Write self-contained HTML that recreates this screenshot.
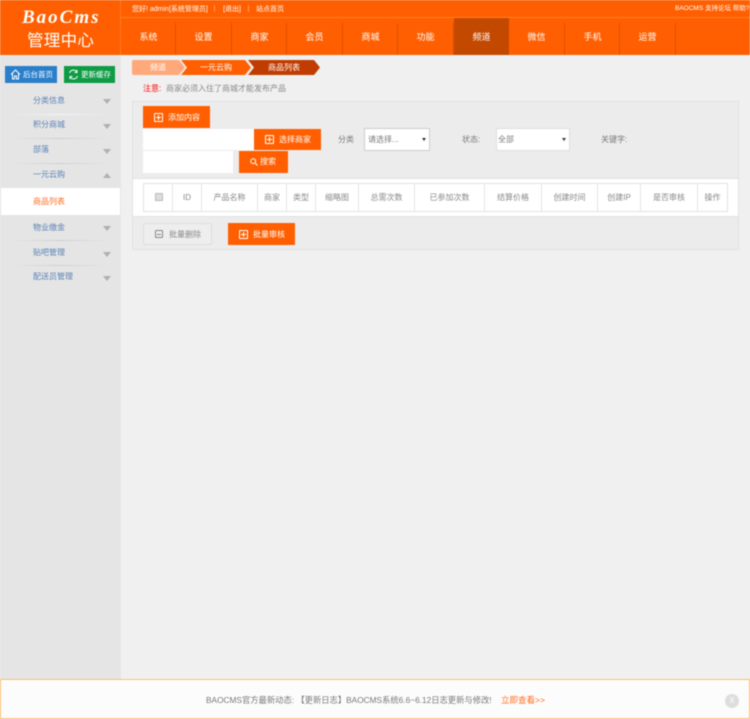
<!DOCTYPE html>
<html lang="zh"><head><meta charset="utf-8"><title>管理中心</title>
<style>
html,body{margin:0;padding:0;width:750px;height:719px;overflow:hidden;background:#f0f0f0}
#w{position:absolute;left:0;top:0;width:750px;height:719px;overflow:hidden;filter:blur(.4px);font-family:"Liberation Sans","WenQuanYi Zen Hei","Noto Sans CJK SC",sans-serif;font-size:8px;color:#7a7a7a}
.a{position:absolute;white-space:nowrap;line-height:1}
.b{position:absolute}
.nav{position:absolute;top:27px;width:55px;text-align:center;color:#fff;font-size:9px;line-height:20px;height:20px}
.sep{position:absolute;top:23px;width:1px;height:32px;background:#e04f00}
.side{position:absolute;left:33px;color:#5b82b5;font-size:8px;line-height:10px;white-space:nowrap}
.tri{position:absolute;left:103px;width:0;height:0;border-left:4px solid transparent;border-right:4px solid transparent;border-top:5px solid #b0b0b0}
.tri.up{border-top:0;border-bottom:5px solid #b0b0b0}
.hr{position:absolute;left:10px;width:100px;height:1px;background:linear-gradient(90deg,#e5e5e5,#cfcfcf 50%,#e5e5e5)}
.btn{position:absolute;background:#ff5f00;color:#fff;font-size:8px;line-height:1;box-sizing:border-box;white-space:nowrap}
.plus{position:absolute;width:7px;height:7px;border:1px solid #fff;border-radius:1px}
.plus:before{content:"";position:absolute;left:1px;right:1px;top:3px;height:1px;background:#fff}
.plus:after{content:"";position:absolute;top:1px;bottom:1px;left:3px;width:1px;background:#fff}
.th{position:absolute;top:183px;height:28px;line-height:30px;text-align:center;font-size:8px;color:#888;border-right:1px solid #e6e6e6;box-sizing:border-box;white-space:nowrap}
</style></head><body><div id="w">
<!-- header -->
<div class="b" style="left:0;top:0;width:750px;height:55px;background:#ff5f00"></div>
<div class="b" style="left:120px;top:0;width:1px;height:55px;background:#ff7a20"></div>
<div class="b" style="left:120px;top:17px;width:630px;height:1px;background:#ff7f2a"></div>
<div class="a" style="left:22px;top:7px;font:italic bold 19px 'Liberation Serif',serif;color:#fff;letter-spacing:2px;">BaoCms</div>
<div class="a" style="left:27px;top:33px;font-size:16.5px;color:#fff;letter-spacing:.3px">管理中心</div>
<div class="a" style="left:132px;top:6px;color:#fff;font-size:7px">您好! admin[系统管理员]</div>
<div class="b" style="left:214px;top:5px;width:1px;height:7px;background:#ff9a55"></div>
<div class="a" style="left:223px;top:6px;color:#fff;font-size:7px">[退出]</div>
<div class="b" style="left:248px;top:5px;width:1px;height:7px;background:#ff9a55"></div>
<div class="a" style="left:256px;top:6px;color:#fff;font-size:7px">站点首页</div>
<div class="a" style="left:675px;top:6px;color:#fff;font-size:6.5px">BAOCMS 支持论坛 帮助?</div>
<div class="b" style="left:453.5px;top:18px;width:55.5px;height:37px;background:#c44900"></div>
<div class="nav" style="left:121px">系统</div><div class="sep" style="left:175px"></div>
<div class="nav" style="left:176px">设置</div><div class="sep" style="left:231px"></div>
<div class="nav" style="left:232px">商家</div><div class="sep" style="left:286px"></div>
<div class="nav" style="left:287px">会员</div><div class="sep" style="left:342px"></div>
<div class="nav" style="left:343px">商城</div><div class="sep" style="left:397px"></div>
<div class="nav" style="left:398px">功能</div><div class="sep" style="left:453px"></div>
<div class="nav" style="left:454px">频道</div>
<div class="nav" style="left:509px">微信</div><div class="sep" style="left:564px"></div>
<div class="nav" style="left:565px">手机</div><div class="sep" style="left:619px"></div>
<div class="nav" style="left:620px">运营</div><div class="sep" style="left:675px"></div>
<!-- sidebar -->
<div class="b" style="left:0;top:55px;width:121px;height:625px;background:#e5e5e5"></div>
<div class="b" style="left:5px;top:66px;width:52px;height:17px;background:#2a7fcb;color:#fff;font-size:7.5px;line-height:17px;text-indent:18px;white-space:nowrap">后台首页
<svg style="position:absolute;left:5px;top:3px" width="11" height="11" viewBox="0 0 11 11" fill="none" stroke="#fff" stroke-width="1"><path d="M1 5.5 5.5 1 10 5.5M2.5 4.5V10H4.5V7H6.5V10H8.5V4.5"/></svg></div>
<div class="b" style="left:64px;top:66px;width:51px;height:17px;background:#0d9c44;color:#fff;font-size:7.5px;line-height:17px;text-indent:17px;white-space:nowrap">更新缓存
<svg style="position:absolute;left:4px;top:3px" width="11" height="11" viewBox="0 0 11 11" fill="none" stroke="#fff" stroke-width="1"><path d="M1.5 4A4.2 4.2 0 0 1 9 3M9.5 7A4.2 4.2 0 0 1 2 8M9 1V3.5H6.5M2 10V7.5H4.5"/></svg></div>
<div class="side" style="top:96px">分类信息</div><div class="tri" style="top:99px"></div><div class="hr" style="top:114px;background:linear-gradient(90deg,#e5e5e5,#f6f6f6 50%,#e5e5e5)"></div>
<div class="side" style="top:120px">积分商城</div><div class="tri" style="top:124px"></div><div class="hr" style="top:138px"></div>
<div class="side" style="top:145px">部落</div><div class="tri" style="top:149px"></div><div class="hr" style="top:163px"></div>
<div class="side" style="top:170px">一元云购</div><div class="tri up" style="top:173px"></div>
<div class="b" style="left:1px;top:188px;width:119px;height:27px;background:#fff"></div>
<div class="side" style="top:197px;color:#ff6a1a">商品列表</div>
<div class="side" style="top:223px">物业缴金</div><div class="tri" style="top:226px"></div><div class="hr" style="top:240px"></div>
<div class="side" style="top:248px">贴吧管理</div><div class="tri" style="top:252px"></div><div class="hr" style="top:265px"></div>
<div class="side" style="top:272px">配送员管理</div><div class="tri" style="top:276px"></div>
<!-- breadcrumb -->
<svg class="b" style="left:132px;top:60px" width="188" height="15" viewBox="0 0 188 15">
<path d="M2 0H47L53 7.5 47 15H2Q0 15 0 13V2Q0 0 2 0Z" fill="#ffa87a"/>
<path d="M49 0H113L119 7.5 113 15H49L55 7.5Z" fill="#ff5f00"/>
<path d="M116 0H182L188 7.5 182 15H116L122 7.5Z" fill="#c13c00"/>
</svg>
<div class="a" style="left:150px;top:64px;color:#fff">频道</div>
<div class="a" style="left:200px;top:64px;color:#fff">一元云购</div>
<div class="a" style="left:268px;top:64px;color:#fff">商品列表</div>
<div class="a" style="left:143px;top:85px;color:#f00">注意:</div>
<div class="a" style="left:166px;top:85px;color:#888">商家必须入住了商城才能发布产品</div>
<!-- panel -->
<div class="b" style="left:132px;top:101px;width:607px;height:149px;background:#ececec;border:1px solid #e2e2e2;box-sizing:border-box"></div>
<div class="b" style="left:133px;top:178px;width:605px;height:39px;background:#fff;border-top:1px solid #e2e2e2;border-bottom:1px solid #e2e2e2;box-sizing:border-box"></div>
<div class="btn" style="left:143px;top:106px;width:67px;height:22px;padding:8px 0 0 25px"><i class="plus" style="left:11px;top:7px"></i>添加内容</div>
<div class="b" style="left:143px;top:129px;width:111px;height:21px;background:#fff"></div>
<div class="btn" style="left:254px;top:129px;width:67px;height:21px;padding:7px 0 0 25px"><i class="plus" style="left:11px;top:6px"></i>选择商家</div>
<div class="a" style="left:338px;top:136px">分类</div>
<div class="b" style="left:364px;top:128px;width:66px;height:23px;background:#fff;border:1px solid #ccc;box-sizing:border-box;font-size:8px;line-height:21px;padding-left:3px">请选择...<span style="position:absolute;right:3px;top:9px;border-left:2px solid transparent;border-right:2px solid transparent;border-top:3px solid #333"></span></div>
<div class="a" style="left:462px;top:136px">状态:</div>
<div class="b" style="left:496px;top:128px;width:74px;height:23px;background:#fff;border:1px solid #ddd;box-sizing:border-box;line-height:21px;padding-left:1px">全部<span style="position:absolute;right:3px;top:9px;border-left:2px solid transparent;border-right:2px solid transparent;border-top:3px solid #333"></span></div>
<div class="a" style="left:601px;top:136px">关键字:</div>
<div class="b" style="left:143px;top:151px;width:90px;height:22px;background:#fff"></div>
<div class="btn" style="left:239px;top:151px;width:49px;height:22px;padding:7px 0 0 21px">搜索
<svg style="position:absolute;left:11px;top:7px" width="8" height="8" viewBox="0 0 8 8" fill="none" stroke="#fff" stroke-width="1"><circle cx="3.2" cy="3.2" r="2.4"/><path d="M5 5 7.5 7.5"/></svg></div>
<!-- table -->
<div class="b" style="left:143px;top:183px;width:585px;height:29px;background:#fff;border:1px solid #e2e2e2;box-sizing:border-box"></div>
<div class="th" style="left:144px;width:29px"></div>
<div class="b" style="left:155px;top:193px;width:6px;height:6px;background:#ddd;border:1px solid #bbb"></div>
<div class="th" style="left:173px;width:29px">ID</div>
<div class="th" style="left:202px;width:56px">产品名称</div>
<div class="th" style="left:258px;width:29px">商家</div>
<div class="th" style="left:287px;width:29px">类型</div>
<div class="th" style="left:316px;width:43px">缩略图</div>
<div class="th" style="left:359px;width:56px">总需次数</div>
<div class="th" style="left:415px;width:70px">已参加次数</div>
<div class="th" style="left:485px;width:57px">结算价格</div>
<div class="th" style="left:542px;width:56px">创建时间</div>
<div class="th" style="left:598px;width:43px">创建IP</div>
<div class="th" style="left:641px;width:57px">是否审核</div>
<div class="th" style="left:698px;width:29px;border:0">操作</div>
<!-- bottom buttons -->
<div class="b" style="left:143px;top:223px;width:69px;height:22px;background:#eee;border:1px solid #ddd;box-sizing:border-box;border-radius:2px;color:#888;line-height:22px;padding-left:25px;white-space:nowrap">批量删除
<span style="position:absolute;left:11px;top:6px;width:6px;height:6px;border:1px solid #888;border-radius:1px"><span style="position:absolute;left:1px;right:1px;top:2.5px;height:1px;background:#888"></span></span></div>
<div class="btn" style="left:228px;top:223px;width:67px;height:22px;padding:8px 0 0 25px"><i class="plus" style="left:11px;top:7px"></i>批量审核</div>
<!-- footer -->
<div class="b" style="left:0;top:679px;width:750px;height:40px;background:rgba(255,255,255,.8);border:1px solid #ffbe66;box-sizing:border-box"></div>
<div class="a" style="left:206px;top:696px;color:#777;font-size:8.3px">BAOCMS官方最新动态: 【更新日志】BAOCMS系统6.6~6.12日志更新与修改!</div>
<div class="a" style="left:501px;top:696px;color:#ff6a1a;font-size:8.5px">立即查看&gt;&gt;</div>
<div class="b" style="left:725px;top:694px;width:14px;height:14px;border-radius:50%;background:#ddd;color:#fff;font-size:8px;line-height:14px;text-align:center">X</div>
</div></body></html>
